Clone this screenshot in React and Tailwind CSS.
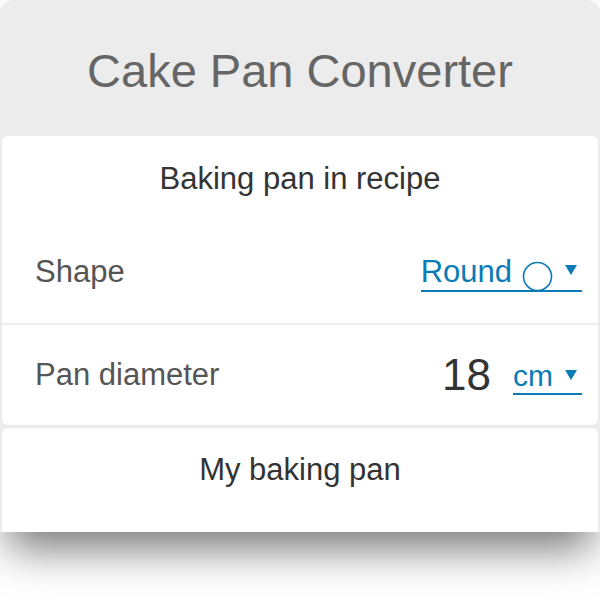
import React from "react";

function Caret() {
  return (
    <svg width="12" height="11" viewBox="0 0 12 11" className="ml-[12px] mr-[5px] mb-[2px]">
      <path d="M0 0 L12 0 L6 10 Z" fill="#0b7bb5" />
    </svg>
  );
}

export default function App() {
  return (
    <div className="w-[600px] h-[600px] bg-white overflow-hidden font-['Liberation_Sans',Arial,sans-serif]">
      <div className="h-[532px] rounded-t-[14px] bg-[#ececec] px-[2px] flex flex-col shadow-[0_24px_44px_-8px_rgba(0,0,0,0.55)] overflow-hidden">
        <div className="h-[136px] flex items-center justify-center shrink-0">
          <h1 className="text-[47px] leading-none text-[#666] mt-[4px]">Cake Pan Converter</h1>
        </div>

        <div className="bg-white rounded-[6px] h-[289px] flex flex-col shrink-0">
          <div className="h-[86px] flex items-center justify-center">
            <h2 className="text-[31px] text-[#333]">Baking pan in recipe</h2>
          </div>
          <div className="h-[103px] flex items-center justify-between px-[33px] border-b-2 border-[#eeeeee]">
            <span className="text-[31px] text-[#555]">Shape</span>
            <span className="flex items-center border-b-2 border-[#0b7bb5] text-[#0b7bb5] text-[31px] leading-[36px] mr-[-17px]">
              Round
              <svg width="31" height="31" viewBox="0 0 31 31" className="ml-[10px] mb-[-10px]">
                <circle cx="15.5" cy="15.5" r="14" fill="none" stroke="#0b7bb5" strokeWidth="1.6" />
              </svg>
              <Caret />
            </span>
          </div>
          <div className="flex-1 flex items-center justify-between px-[33px]">
            <span className="text-[31px] text-[#555]">Pan diameter</span>
            <div className="flex items-center mr-[-17px]">
              <span className="text-[44px] text-[#333] mr-[22px]">18</span>
              <span className="flex items-center border-b-2 border-[#0b7bb5] text-[#0b7bb5] text-[30px] leading-[34px] mt-[4px]">
                cm
                <Caret />
              </span>
            </div>
          </div>
        </div>

        <div className="bg-white rounded-t-[6px] mt-[3px] flex-1 flex justify-center pt-[19px]">
          <h2 className="text-[31px] text-[#333]">My baking pan</h2>
        </div>
      </div>
    </div>
  );
}
